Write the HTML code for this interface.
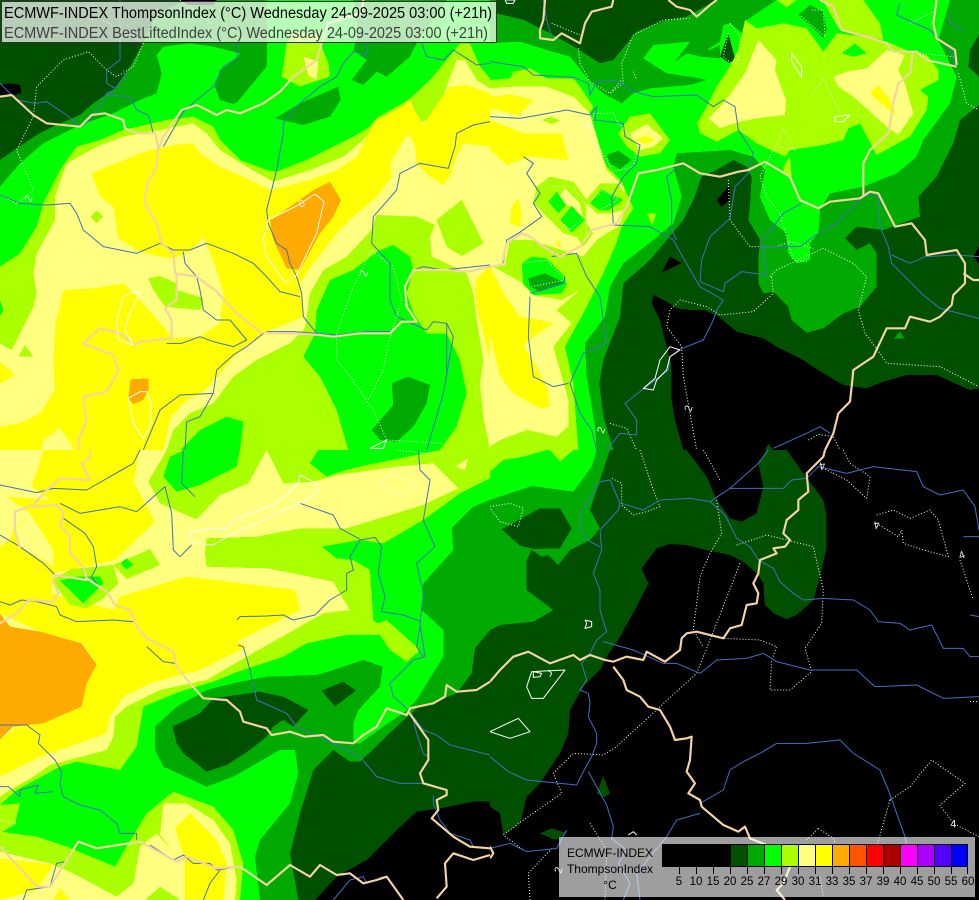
<!DOCTYPE html>
<html><head><meta charset="utf-8"><title>ECMWF-INDEX ThompsonIndex</title>
<style>
html,body{margin:0;padding:0;background:#000;width:979px;height:900px;overflow:hidden}
svg{display:block}
.a{fill:#005000}.b{fill:#00aa00}.c{fill:#00ff00}.d{fill:#aaff00}.e{fill:#ffff80}.f{fill:#ffff00}.g{fill:#ffaa00}.k{fill:#000}
polygon{shape-rendering:crispEdges}
polyline{fill:none;stroke-linejoin:round}
.B polyline{stroke:#3f70c4;stroke-width:3}
.T polyline{stroke:#f5d3a2;stroke-width:6.5}
.W polyline{stroke:#fff;stroke-width:3}
.D polyline{stroke:#fff;stroke-width:3;stroke-dasharray:3 6}
.L text{fill:#f0f0f0;font:32px "Liberation Sans",sans-serif;text-anchor:middle}
text{font-family:"Liberation Sans",sans-serif}
</style></head><body>
<svg width="979" height="900" viewBox="0 0 979 900" xmlns="http://www.w3.org/2000/svg">
<!-- Q1 -->
<svg x="0" y="0" width="490" height="450" viewBox="0 0 1470 1350">
<rect width="1470" height="1350" class="c"/>
<polygon class="b" points="0,0 1340,0 1250,130 1230,170 1160,230 1130,215 1090,255 1055,240 1100,180 1060,150 1075,100 1060,0 800,0 805,130 800,200 760,280 700,312 660,300 645,260 660,210 705,180 720,160 640,140 570,130 490,140 470,165 485,220 470,280 420,300 340,340 240,375 130,430 60,490 0,560"/>
<polygon class="c" points="805,0 1060,0 1075,100 1060,150 1100,180 1055,240 900,300 825,355 700,320 800,200"/>
<polygon class="a" points="0,0 640,0 560,0 470,40 430,130 390,200 345,265 280,310 240,345 170,375 110,405 50,445 0,480"/>
<polygon class="k" points="0,255 30,250 60,255 65,280 40,285 0,285"/>
<polygon class="k" points="540,0 650,0 640,15 560,15"/>
<polygon class="b" points="825,355 900,310 1015,260 1022,300 990,350 910,375"/>
<polygon class="d" points="860,130 845,230 900,260 990,230 985,190 950,100 880,100"/>
<polygon class="e" points="910,170 955,185 950,240 925,225"/>
<polygon class="d" points="0,800 60,760 110,680 130,610 180,510 230,440 300,420 370,390 500,360 580,350 640,380 660,420 720,480 800,510 830,515 920,480 1000,440 1060,410 1110,380 1130,355 1190,320 1225,300 1290,240 1340,180 1380,130 1410,130 1440,200 1470,235 1470,1350 0,1350"/>
<polygon class="e" points="35,1050 60,1000 100,920 110,880 100,820 110,760 165,660 165,590 200,490 290,440 370,410 480,390 580,370 620,400 660,450 740,500 820,545 930,510 1030,470 1090,420 1130,370 1200,340 1230,300 1260,370 1310,340 1340,260 1370,180 1395,180 1430,240 1470,265 1470,1350 0,1350 0,1030"/>
<polygon class="f" points="275,520 420,460 520,435 580,430 600,460 660,500 740,535 810,570 930,540 1010,510 1070,470 1125,360 1205,320 1225,300 1270,375 1320,300 1350,260 1400,255 1470,280 1470,440 1390,430 1365,480 1350,530 1330,555 1290,530 1250,490 1245,440 1225,400 1170,490 1175,530 1130,590 1060,650 1010,700 940,790 900,850 910,950 790,1000 720,1050 660,1120 605,1180 560,1200 510,1255 490,1350 225,1350 180,1285 130,1320 125,1350 0,1350 0,1280 60,1270 120,1240 165,1170 160,1100 165,980 190,870 280,865 370,850 355,715 340,620 300,590"/>
<polygon class="e" points="355,715 420,755 480,770 520,775 575,750 610,710 640,780 670,880 660,970 600,1010 520,1015 420,900 370,850"/>
<polygon class="f" points="0,1085 45,1125 0,1150"/>
<polygon class="d" points="272,650 290,632 310,650 290,670"/>
<polygon class="d" points="445,835 480,828 530,850 530,870 610,895 600,930 495,920 460,870"/>
<polygon class="d" points="55,1070 75,1035 100,1070"/>
<polygon class="g" points="810,660 870,620 940,570 990,545 1023,600 1000,650 960,700 900,810 860,805 820,720"/>
<polygon class="g" points="385,1195 392,1138 445,1135 445,1170 430,1200 400,1212"/>
<polygon class="d" points="500,1350 520,1290 570,1240 640,1210 700,1130 770,1080 870,1030 915,985 930,880 970,810 1040,770 1115,690 1130,645 1250,650 1305,675 1290,710 1295,770 1360,800 1400,820 1420,880 1430,960 1450,1080 1440,1150 1450,1250 1470,1350"/>
<polygon class="f" points="1470,795 1425,840 1430,920 1450,1000 1470,1080"/>
<polygon class="d" points="1310,660 1385,600 1450,730 1385,768 1340,740"/>
<polygon class="c" points="910,1070 945,1000 950,930 990,840 1060,810 1130,755 1180,735 1230,770 1240,810 1220,880 1240,940 1280,1000 1340,1000 1380,1080 1400,1180 1370,1280 1320,1350 1045,1350 1010,1230 960,1130"/>
<polygon class="c" points="540,1350 600,1290 680,1250 730,1265 720,1350"/>
<polygon class="c" points="0,900 10,930 0,950"/>
<polygon class="b" points="1115,1290 1180,1215 1175,1150 1225,1130 1290,1155 1280,1210 1240,1280 1190,1325 1140,1320"/>
<g class="D">
<polyline points="430,130 400,200 350,230 320,210 265,155 190,180 110,260 100,350 50,450 100,570 50,610 0,585"/>
<polyline points="1110,760 1060,860 1010,1000 1010,1080 1050,1130 1120,1230 1160,1320"/>
<polyline points="1110,750 1180,800 1205,900 1165,1030 1150,1110 1100,1210"/>
<polyline points="1160,1320 1330,1330"/>
<polyline points="310,60 430,130"/>
<polyline points="540,0 640,75"/>
</g>
<g class="B">
<polyline points="360,0 360,180 320,210 320,250 345,265 375,230 370,210"/>
<polyline points="345,270 320,280 270,360 240,380"/>
<polyline points="0,250 50,300 105,310 140,305 200,345 240,380"/>
<polyline points="320,285 390,290 410,330 445,345 460,400"/>
<polyline points="715,130 710,175 670,200 640,260 590,300 550,335 490,440"/>
<polyline points="1100,130 1100,165 1060,155 1030,190 1010,230 960,260 900,310 850,370 850,400 830,510 800,630 805,670 830,730 860,750 870,790 890,830 905,880 910,950 950,1000"/>
<polyline points="0,585 60,610 140,615 210,610 230,640 250,690 310,740 410,760 480,730 520,750 570,750 620,730 700,760 760,790 800,830 840,875 900,890"/>
<polyline points="550,755 555,790 590,830 600,870 610,930 650,960 690,960 740,1020 700,1040 640,1025 600,1010 545,1030 500,1030"/>
<polyline points="790,1000 740,1040 700,1065 650,1110 640,1180 540,1185 480,1230 430,1350"/>
<polyline points="640,1180 600,1250 560,1265 555,1350"/>
<polyline points="1470,365 1420,375 1370,400 1365,440 1345,505 1260,490 1200,520 1190,570 1120,650 1115,730 1170,790 1170,900 1190,950 1280,990 1300,965 1340,970 1360,1010 1330,1180 1280,1350"/>
<polyline points="1240,810 1270,800 1330,810 1470,795"/>
<polyline points="1265,130 1280,170 1330,180 1360,150 1400,175 1430,195 1470,190"/>
<polyline points="800,995 880,995 950,1000 1010,1005 1100,995 1180,995"/>
<polyline points="1340,970 1340,1130"/>
</g>
<g class="T">
<polyline points="0,290 35,285 100,345 140,370 240,380 275,345 315,340 370,360 375,385 410,400 465,400 475,440 470,500 440,555 435,610 470,670 485,730 520,760 525,820 590,830 650,875 710,940 780,995 800,1000 880,1000 960,1005 1000,1010 1080,1000 1170,1000 1205,965 1250,965 1220,920 1215,860 1240,810 1300,810 1340,810 1405,815 1470,800"/>
<polyline points="1090,0 1085,40 1030,55 985,70 965,130 950,180 880,230 840,275 790,310 720,340 680,330 650,345 590,315 545,330 490,410 475,450"/>
<polyline points="530,820 530,900 495,925 515,960 515,1015 420,1025 405,1035 360,1000 300,985 250,1030 340,1065 355,1110 340,1140 320,1175 250,1190 260,1260 235,1320 240,1350"/>
</g>
<g class="W">
<polyline points="805,660 895,615 945,582 972,605 950,700 890,825 855,848 800,770 790,720 805,660"/>
<polyline points="420,880 400,875 370,890 350,960 355,1020 400,1035 375,990 385,950 420,880"/>
<polyline points="385,1195 420,1175 440,1175 452,1210 452,1270 430,1315 400,1270 385,1195"/>
<polyline points="1110,1345 1160,1320 1150,1345 1110,1345"/>
</g>
<g class="L">
<text x="85" y="606" transform="rotate(-70 85 595)">2</text>
<text x="1090" y="832" transform="rotate(-70 1090 820)">2</text>
<text x="905" y="621" transform="rotate(-30 905 610)">0</text>
</g>
</svg>
<!-- Q2 -->
<svg x="490" y="0" width="489" height="450" viewBox="0 0 1467 1350">
<rect width="1467" height="1350" class="a"/>
<polygon class="b" points="0,0 1467,0 1467,315 1410,360 1390,430 1340,530 1285,590 1290,650 1180,690 1100,680 1065,715 1100,750 1140,730 1160,760 1160,860 1110,920 1060,940 1000,985 950,998 905,960 895,920 850,875 820,880 805,850 805,780 810,720 775,660 780,620 785,530 770,500 730,480 680,510 635,530 610,600 580,660 480,780 400,850 390,950 340,1080 328,1150 340,1250 370,1350 0,1350"/>
<polygon class="a" points="20,0 680,0 590,50 530,60 440,95 370,180 330,190 260,145 180,100 100,60 20,40"/>
<polygon class="a" points="1467,105 1440,150 1435,200 1467,230"/>
<polygon class="c" points="0,130 90,125 170,150 240,170 300,245 340,280 395,310 430,280 480,265 600,255 650,240 720,210 770,190 770,60 860,0 1380,0 1345,120 1400,230 1380,310 1300,420 1280,470 1220,520 1120,560 1020,580 990,630 985,700 960,730 960,780 920,790 895,760 890,700 840,660 810,590 825,510 790,470 720,450 560,460 550,500 575,590 550,670 490,720 400,790 360,860 345,950 285,1030 290,1130 315,1280 320,1350 0,1350"/>
<polygon class="c" points="460,175 490,135 600,125 650,150 690,125 700,75 720,70 770,110 780,150 770,190 720,210 650,240 600,230 530,220"/>
<polygon class="b" points="555,185 600,125 660,150 690,135 690,175 630,170 590,160"/>
<polygon class="a" points="715,100 735,175 720,190 690,170"/>
<polygon class="b" points="925,45 960,15 1000,35 1010,90 1000,115 965,80"/>
<polygon class="d" points="1000,0 1120,0 1170,70 1180,120 1130,110 1050,90 1020,40"/>
<polygon class="d" points="860,0 890,22 920,0"/>
<polygon class="d" points="765,60 800,85 880,70 950,85 1000,155 1040,100 1130,110 1190,125 1260,155 1310,165 1345,210 1345,240 1290,270 1315,290 1310,330 1260,410 1160,465 1110,370 1075,385 1060,420 1000,435 900,450 885,470 800,430 745,390 680,425 630,400 622,370 650,320 680,260 720,200 745,150"/>
<polygon class="c" points="1055,160 1095,130 1130,160 1090,170"/>
<polygon class="e" points="805,120 860,180 855,210 888,300 885,345 800,355 750,365 690,385 655,355 700,310 765,220"/>
<polygon class="e" points="1030,230 1070,215 1130,205 1190,150 1245,165 1225,210 1245,250 1270,340 1225,405 1190,380 1090,290 1045,260"/>
<polygon class="f" points="1140,280 1165,255 1200,300 1218,345 1195,330"/>
<polygon class="d" points="880,500 900,470 905,530 880,515"/>
<polygon class="d" points="0,240 60,235 70,215 120,205 170,235 250,235 270,260 310,320 295,345 270,420 300,445 320,430 350,500 395,545 430,625 395,680 375,740 340,820 300,900 285,930 225,1040 250,1150 265,1350 0,1350"/>
<polygon class="e" points="0,265 70,260 170,260 250,290 300,340 350,510 400,560 410,620 385,680 350,700 320,720 280,770 120,720 60,720 45,795 0,800"/>
<polygon class="e" points="0,795 100,850 130,885 215,900 270,870 200,930 245,970 190,1040 235,1200 235,1280 200,1310 110,1290 30,1320 0,1340"/>
<polygon class="d" points="65,790 100,725 130,720 170,760 290,770 310,800 340,820 300,880 270,870 215,900 130,885 95,850 90,820"/>
<polygon class="c" points="95,790 125,770 170,775 225,830 230,855 215,880 130,885 100,850"/>
<polygon class="b" points="115,835 165,820 225,850 150,875 120,860"/>
<polygon class="f" points="0,290 60,283 130,300 85,345 0,325"/>
<polygon class="f" points="0,360 100,400 215,400 235,480 120,470 50,495 0,450"/>
<polygon class="f" points="60,670 65,620 85,595 95,640 90,680"/>
<polygon class="f" points="0,800 40,880 90,950 150,960 190,970 130,1010 100,1035 140,1100 175,1170 178,1220 150,1225 70,1180 30,1130 0,1000"/>
<polygon class="f" points="197,730 207,722 213,735 205,740"/>
<polygon class="d" points="155,360 185,350 210,362 185,372"/>
<polygon class="d" points="140,560 180,530 250,545 290,600 290,670 310,700 280,740 260,710 220,700 160,640 130,610"/>
<polygon class="d" points="285,605 330,550 385,550 430,625 360,640 320,640"/>
<polygon class="e" points="200,600 225,565 270,610 280,660 245,620 225,615"/>
<polygon class="c" points="175,605 200,575 228,615 205,640"/>
<polygon class="c" points="210,660 245,618 285,660 245,697"/>
<polygon class="c" points="300,610 335,568 400,600 355,632 330,632"/>
<polygon class="d" points="385,400 420,350 480,340 540,420 510,460 450,470 410,440"/>
<polygon class="e" points="420,400 470,372 520,415 490,440 450,450"/>
<polygon class="f" points="435,420 465,407 495,420 465,432"/>
<polygon class="b" points="350,465 385,452 425,480 390,508 360,490"/>
<polygon class="d" points="470,640 500,640 487,675"/>
<polygon class="k" points="720,555 680,600 695,620 720,600"/>
<polygon class="k" points="515,818 540,770 575,790"/>
<polygon class="k" points="1467,740 1450,770 1467,790"/>
<polygon class="k" points="485,910 490,885 530,905 560,925 600,930 640,930 680,945 740,995 820,1015 860,1040 930,1075 1000,1120 1060,1155 1130,1165 1180,1145 1250,1125 1340,1125 1440,1170 1467,1165 1467,1350 590,1350 580,1350 555,1260 545,1200 545,1100 525,1020 510,960"/>
<polygon class="a" points="825,1350 835,1332 850,1350"/>
<polygon class="b" points="1212,1015 1230,995 1243,1015"/>
<g class="D">
<polyline points="265,145 270,190 300,245 360,280 395,240"/>
<polyline points="600,55 520,60 430,105 395,190 400,250 360,280"/>
<polyline points="430,215 440,240"/>
<polyline points="720,70 750,110 745,180 725,190 700,170 715,100"/>
<polyline points="185,70 270,105"/>
<polyline points="270,430 315,340 370,340 385,370 445,435 430,500 370,515 350,480 320,430"/>
<polyline points="190,560 250,560 290,620 290,700"/>
<polyline points="210,660 240,690 285,650"/>
<polyline points="300,605 340,570 385,600 330,630"/>
<polyline points="100,790 170,780 225,840 125,860"/>
<polyline points="965,285 1000,235 1050,340"/>
<polyline points="965,30 1000,30 1005,110 930,45"/>
<polyline points="880,385 915,450 860,440 880,385"/>
<polyline points="860,430 810,530 830,590 870,640 910,780 950,785"/>
<polyline points="715,540 720,660 780,740 860,740 900,725 970,745"/>
<polyline points="840,830 860,810 1000,745 1090,790 1130,830 1105,930 1125,1000 1170,1060 1190,1090 1350,1100 1467,1160"/>
<polyline points="845,830 850,880 790,935 690,945 650,920 570,900 540,930 530,980 575,1040 580,1130 620,1350"/>
<polyline points="360,1270 410,1285 440,1350"/>
<polyline points="1260,70 1340,30"/>
<polyline points="1290,160 1390,170"/>
<polyline points="1405,220 1430,310 1467,330"/>
<polyline points="955,1320 985,1303 1030,1310 1050,1350"/>
</g>
<g class="B">
<polyline points="160,0 170,60 185,110"/>
<polyline points="0,185 100,200 130,225 250,232 295,250 300,285 320,245 380,240 430,275 490,290 620,285 670,320 700,300 735,320 745,390 790,460 775,520 735,560 720,655 660,710 635,780 630,845 700,875 705,850 755,815 830,825 815,720 850,680 880,640 935,610"/>
<polyline points="0,350 90,355 230,330 300,345 320,320 315,360 400,370 405,410 450,435 440,490 400,530 365,590 370,675 480,680 550,720 595,800 630,860 700,900 680,930 670,960 640,1020 570,1048 540,1070 535,1110 430,1190 405,1210 440,1260 440,1305 390,1300 350,1350"/>
<polyline points="100,470 130,490 110,520 150,580 130,610 155,650 85,700 50,720 40,790"/>
<polyline points="185,770 260,760 290,830 330,890 340,960 350,1030 280,1060 240,1150 270,1240 305,1290 320,1350"/>
<polyline points="120,890 115,1010 130,1130 190,1160 235,1150"/>
<polyline points="120,880 220,850 225,830"/>
<polyline points="565,500 530,530 545,600 545,690 560,720"/>
<polyline points="805,740 930,740 985,700 1040,670 1100,610 1115,590 1165,580 1170,680 1195,740 1205,790 1300,885 1350,925 1467,955"/>
<polyline points="1205,765 1260,790 1305,770 1400,765 1467,770"/>
<polyline points="1380,40 1380,70 1420,90"/>
<polyline points="1230,10 1220,45 1320,90 1380,150 1395,195"/>
<polyline points="850,1345 950,1300 990,1280 1020,1300"/>
</g>
<g class="T">
<polyline points="370,0 365,20 305,35 285,70 270,130 215,100 190,120 150,115 150,90 160,60 165,0"/>
<polyline points="535,0 560,20 600,30 620,50 660,15 680,0"/>
<polyline points="990,0 1030,20 1055,90 1130,110 1190,130 1210,155 1280,155 1310,180 1400,200"/>
<polyline points="1268,160 1260,220 1225,250 1210,310 1195,400 1140,450 1120,490 1120,590"/>
<polyline points="1340,0 1330,70 1340,115 1395,150 1400,195"/>
<polyline points="0,800 35,795 50,730 95,700 120,710 175,750 210,770 270,740 305,690 360,675 380,670 410,620 445,520 500,510 580,490 630,520 690,530 745,515 775,510 825,485 900,530 930,600 985,625 1020,605 1110,595 1140,575 1165,580 1195,640 1215,680 1265,670 1305,720 1310,765 1400,750 1425,790 1425,850 1390,885 1385,915 1350,950 1320,965 1260,950 1245,985 1190,985 1150,1070 1090,1110 1085,1160 1080,1205 1045,1240 1030,1300 1005,1350"/>
<polyline points="1420,820 1450,840 1467,840"/>
</g>
<g class="W">
<polyline points="905,160 935,200 935,232 905,185 905,160"/>
<polyline points="1035,350 1080,345 1060,365 1035,365 1035,350"/>
<polyline points="540,1040 570,1050 540,1070 530,1110 500,1140 490,1170 460,1165 495,1135 510,1080 540,1040"/>
<polyline points="45,0 75,0 70,10 50,10 45,0"/>
</g>
<g class="L">
<text x="293" y="386" transform="rotate(-70 293 375)">2</text>
<text x="595" y="1236" transform="rotate(-70 595 1225)">2</text>
<text x="333" y="1301" transform="rotate(-70 333 1290)">2</text>
</g>
</svg>
<!-- Q3 -->
<svg x="0" y="450" width="490" height="450" viewBox="0 0 1470 1350">
<rect width="1470" height="1350" class="c"/>
<polygon class="b" points="1470,150 1420,170 1355,235 1360,300 1270,400 1265,480 1330,540 1330,620 1250,750 1215,785 1150,830 1080,880 1060,880 1060,820 1075,780 1140,710 1148,650 1090,630 1000,660 950,675 800,680 700,700 620,720 530,770 465,830 465,900 490,950 620,1010 700,980 840,900 885,900 895,970 870,1060 780,1170 765,1220 780,1350 1470,1350"/>
<polygon class="a" points="1470,540 1425,595 1415,670 1370,730 1250,775 1200,820 1080,935 1050,935 1000,900 940,960 900,1090 870,1210 895,1350 1470,1350"/>
<polygon class="a" points="518,830 600,790 640,745 780,725 850,740 925,780 880,830 850,810 820,830 800,860 750,900 680,945 620,965 550,910 530,880"/>
<polygon class="a" points="965,722 1030,695 1068,722 1005,770"/>
<polygon class="k" points="1470,1055 1420,1055 1320,1075 1250,1085 1190,1140 1100,1230 1010,1280 950,1345 950,1350 1470,1350"/>
<polygon class="d" points="0,0 1470,0 1470,85 1380,130 1270,210 1150,280 1080,270 965,290 1010,325 1060,330 1110,360 1120,510 1135,520 1160,510 1260,600 1220,635 1170,600 1140,555 1040,555 920,580 850,620 700,670 640,695 540,725 430,770 410,890 360,960 230,935 180,950 50,1020 0,1065"/>
<polygon class="c" points="490,80 510,20 555,0 720,0 710,50 600,105 530,125"/>
<polygon class="c" points="930,40 955,0 1320,0 1200,25 1100,45 1020,65 980,80"/>
<polygon class="e" points="0,0 500,0 445,95 480,160 590,208 660,135 745,100 800,0 850,100 940,95 1010,75 1190,50 1300,40 1375,115 1270,165 1040,235 900,235 770,260 620,265 615,310 620,350 800,355 880,370 1000,395 1020,430 1050,480 970,490 900,530 740,620 620,690 480,720 380,770 345,800 340,860 320,900 150,945 100,980 30,1020 0,1040"/>
<polygon class="e" points="1365,50 1405,25 1395,60"/>
<polygon class="f" points="130,0 420,0 400,95 465,215 345,330 160,370 155,430 340,480 360,440 560,380 885,420 900,480 710,575 740,590 600,660 520,680 450,700 370,740 330,800 320,850 120,920 0,980 0,870 50,830 130,820 230,770 260,680 290,645 250,580 120,545 0,490 0,290 30,270 40,240 90,190 20,140 150,150 95,110"/>
<polygon class="e" points="90,190 160,300 160,350 60,290 45,240"/>
<polygon class="g" points="0,490 30,530 120,545 245,580 290,645 260,700 245,770 130,820 40,830 0,870"/>
<polygon class="d" points="155,390 215,357 340,345 355,400 310,445 260,475 210,465"/>
<polygon class="d" points="340,345 450,297 480,345 380,387"/>
<polygon class="c" points="180,392 230,380 300,380 310,400 250,460"/>
<polygon class="c" points="362,340 380,325 400,345 378,358"/>
<polygon class="d" points="0,1145 110,1160 200,1190 345,1250 380,1190 440,1090 520,1025 640,1070 700,1140 730,1240 720,1350 0,1350"/>
<polygon class="d" points="0,1065 60,1060 45,1120 0,1150"/>
<polygon class="e" points="0,1205 150,1240 220,1270 350,1340 400,1300 420,1190 470,1150 520,1205 480,1155 490,1060 560,1060 640,1110 690,1180 710,1290 705,1350 0,1350"/>
<polygon class="f" points="525,1135 570,1090 650,1170 680,1240 670,1350 555,1350 555,1230"/>
<polygon class="f" points="0,1225 160,1245 110,1320 0,1350"/>
<polygon class="f" points="160,1350 180,1315 210,1350"/>
<polygon class="d" points="435,1350 480,1310 540,1350"/>
<g class="D">
<polyline points="1190,0 1280,10 1320,10"/>
<polyline points="1140,100 1170,70 1250,100 1240,125 1180,135 1140,100"/>
<polyline points="0,1110 50,1120 10,1145"/>
</g>
<g class="B">
<polyline points="0,105 110,128 160,115 260,120 330,80 400,40 420,0"/>
<polyline points="180,160 240,190 360,170 410,185 495,110 515,190 520,300 540,320 575,285"/>
<polyline points="550,0 545,100 585,140"/>
<polyline points="190,205 255,250 280,290 290,350 275,380 300,415"/>
<polyline points="0,255 60,290 130,340 165,375"/>
<polyline points="0,455 30,465 65,450 110,455 170,470 180,495 230,515 340,510 400,515"/>
<polyline points="0,825 80,825 120,855 115,880 165,930 185,965 180,1000 190,1040 240,1065 300,1080 350,1120 360,1150 410,1150 410,1170"/>
<polyline points="0,1010 25,1010 60,1040 60,1020 115,1005 105,1030 160,1025"/>
<polyline points="440,590 490,635 525,640"/>
<polyline points="710,510 720,500 800,498 850,495 880,510 945,495 990,450 1040,420 1040,370 1060,360 1050,320 1080,270 1125,262 1145,290 1135,370 1155,440 1145,485 1210,495 1265,515"/>
<polyline points="900,160 1000,195 1020,235 1080,268"/>
<polyline points="1255,0 1260,60 1290,90 1270,210 1305,290 1250,340 1270,430 1260,520 1275,620 1240,630 1170,700 1180,740 1220,775"/>
<polyline points="1260,530 1250,590 1270,620"/>
<polyline points="715,585 730,590 750,660 770,750 860,790 890,830 1000,880 1080,920 1130,980 1200,1000 1280,1000"/>
<polyline points="1240,800 1270,840 1310,855 1350,885 1470,915"/>
<polyline points="1235,790 1250,850 1270,910 1285,920"/>
<polyline points="1300,1035 1300,1060 1320,1110 1350,1150 1410,1170 1420,1190"/>
<polyline points="450,1185 520,1230 550,1215 580,1240 630,1240 650,1260 720,1250"/>
<polyline points="195,1235 170,1240 150,1310 80,1320 70,1350"/>
<polyline points="660,1260 630,1300 610,1350"/>
<polyline points="1000,1350 1050,1290 1090,1280 1100,1300 1150,1280"/>
</g>
<g class="T">
<polyline points="270,0 270,20 245,40 270,90 180,85 135,125 100,165 45,185 45,240 60,295"/>
<polyline points="100,170 170,165 190,190 180,225 210,260 210,305 255,360 260,390 165,375 160,395 175,430 160,455 85,450 50,490 0,520"/>
<polyline points="260,385 320,425 345,465 390,480 410,530 440,565 520,605 530,650 570,700 610,745 680,750 720,785 730,815 800,835 815,855 870,845 915,860 970,855 1000,875 1060,880 1090,855 1130,830 1160,775 1220,795 1230,775 1300,760 1335,740 1340,705 1370,725 1430,720 1470,695"/>
<polyline points="1225,785 1285,870 1285,930 1260,970 1270,1000 1340,1020 1340,1035 1310,1050 1315,1080 1295,1105 1360,1160 1410,1190 1470,1195"/>
<polyline points="0,1190 110,1310 150,1310 210,1215 235,1175 290,1195 420,1175 530,1235 560,1220 650,1255 720,1250 800,1305 870,1245 930,1280 960,1245 1010,1275 1050,1270 1090,1300 1130,1290 1160,1280 1210,1350"/>
<polyline points="1470,1215 1420,1230 1360,1210 1335,1240 1340,1310 1310,1345"/>
</g>
<g class="W">
<polyline points="565,270 570,245 630,235 680,235 700,210 830,160 895,100 900,75 950,100 955,125 920,150 830,190 770,220 690,255 640,285 590,280 565,270"/>
</g>
</svg>
<!-- Q4 -->
<svg x="490" y="450" width="489" height="450" viewBox="0 0 1467 1350">
<rect width="1467" height="1350" class="k"/>
<polygon class="a" points="590,0 650,80 680,150 720,205 755,215 800,190 820,110 805,40 830,0 890,0 940,70 1000,150 1010,200 1010,290 990,380 970,450 920,495 890,507 850,490 825,465 820,400 800,370 760,335 720,315 650,300 590,285 540,282 500,295 455,355 475,400 440,470 390,560 350,620 330,660 280,710 240,780 235,850 210,910 150,1000 110,1040 90,1120 40,1155 30,1090 0,1070 0,0"/>
<polygon class="a" points="340,978 360,1030 345,1042 320,1030"/>
<polygon class="a" points="150,1150 185,1135 230,1150 195,1170"/>
<polygon class="b" points="0,540 30,525 130,515 190,480 110,420 110,330 125,300 155,320 175,315 205,345 240,300 300,270 330,235 300,180 360,0 0,0"/>
<polygon class="a" points="35,238 150,175 210,175 245,235 210,295 130,297 90,287"/>
<polygon class="c" points="0,150 125,108 250,125 305,50 320,0 0,0"/>
<polygon class="d" points="0,65 40,30 100,20 170,0 0,0"/>
<polygon class="d" points="180,0 210,35 250,0"/>
<g class="D">
<polyline points="450,0 490,120 510,170 470,185 430,195 395,165 395,100 365,85"/>
<polyline points="640,0 690,90"/>
<polyline points="680,150 695,250 660,310 630,380 610,540 640,590"/>
<polyline points="750,340 680,520 620,670 510,770 380,890 340,915 250,910 190,970 215,1030 100,1110 40,1155 100,1200"/>
<polyline points="740,285 830,255 970,290 1000,420 995,520 945,595 965,665 900,720 840,720 845,630 860,590 810,570 700,565"/>
<polyline points="1060,0 1080,40 1140,80 1130,145 1070,90 990,50"/>
<polyline points="1160,195 1210,180 1260,205 1320,180 1345,210 1375,320 1300,300 1240,280 1235,240 1225,260 1160,220"/>
<polyline points="1410,330 1450,450"/>
<polyline points="1440,755 1467,755"/>
<polyline points="1200,1050 1260,1010 1325,930 1425,1000 1350,1065 1390,1120 1467,1160"/>
<polyline points="1200,1050 1160,1190"/>
<polyline points="0,170 60,160 100,175 85,230 30,215 0,175"/>
<polyline points="300,1120 350,1200 345,1350"/>
<polyline points="120,1350 115,1270 190,1190"/>
<polyline points="985,1135 1030,1165 1040,1190"/>
<polyline points="950,1170 985,1135"/>
<polyline points="990,1280 1000,1340"/>
</g>
<g class="B">
<polyline points="0,920 55,965 110,990 260,1005 280,965 305,920 320,880 320,850 295,800 300,760 295,730 270,720 290,690 275,640 300,610 320,570 350,545 330,480 330,420 310,370 335,300 330,240 385,180 390,160 360,90 330,95 295,150 270,190 270,230 290,270 330,290"/>
<polyline points="395,160 460,180 510,150 600,145 660,155 720,115 880,115 905,90 950,85 985,50 1070,70 1150,50 1280,65 1300,110 1350,135 1420,120 1455,170 1467,240"/>
<polyline points="1420,260 1467,260"/>
<polyline points="660,155 705,195 740,265 780,290 805,330 850,355 870,395 910,430 940,450 1000,445 1090,450 1140,480 1165,515 1230,520 1260,540 1325,525 1360,595 1420,595 1440,620 1467,620"/>
<polyline points="720,115 805,40 835,0"/>
<polyline points="340,575 430,600 520,640 560,640 630,670 680,630 770,625 820,610 860,635 960,660 1100,660 1155,710 1280,705 1360,745 1467,740"/>
<polyline points="630,1060 700,1020 720,960 760,935 810,910 860,880 950,880 1050,870 1090,910 1170,960 1195,1020 1245,1160 1250,1190"/>
<polyline points="630,1090 560,1110 530,1160 440,1270 450,1350"/>
<polyline points="295,965 350,1065 370,1130 365,1165 410,1200 385,1240 420,1300 400,1350"/>
<polyline points="0,1195 60,1180 110,1205 200,1195 230,1140"/>
<polyline points="1440,495 1467,500"/>
</g>
<g class="T">
<polyline points="1005,0 1000,20 950,70 955,125 925,150 925,180 890,210 880,250 900,270 885,290 850,295 860,310 810,330 805,370 790,400 805,430 800,460 770,465 755,525 720,535 700,565 620,545 590,550 575,565 570,600 525,635 470,605 460,630 410,620 370,635 345,630 300,615 270,630 250,615 180,640 115,605 70,620 30,660 0,695"/>
<polyline points="370,650 400,690 410,720 450,740 475,770 510,780 540,830 555,870 590,865 605,860 600,930 590,965 615,1000 595,1030 630,1050 635,1070 700,1125 745,1145 765,1130 780,1165 830,1185 900,1250 880,1300 860,1320 885,1350"/>
<polyline points="0,1190 10,1210 0,1225"/>
</g>
<g class="W">
<polyline points="125,665 225,660 160,745 125,745 110,710 125,665"/>
<polyline points="0,845 85,805 120,845 60,865 0,845"/>
<polyline points="285,510 305,515 305,530 285,535 290,520 285,510"/>
<polyline points="130,665 155,670 150,680 130,682 130,665"/>
<polyline points="175,660 185,670 180,680"/>
<polyline points="415,1155 430,1145 440,1155"/>
</g>
<g class="L">
<text x="1390" y="1132">4</text>
<text x="997" y="59" transform="rotate(170 997 48)">4</text>
<text x="1160" y="236" transform="rotate(170 1160 225)">4</text>
<text x="1415" y="326" transform="rotate(-20 1415 315)">4</text>
<text x="205" y="1271" transform="rotate(-70 205 1260)">2</text>
</g>
</svg>
<!-- header -->
<rect x="1.5" y="1.5" width="495" height="41" fill="#fff" fill-opacity=".72" stroke="#303030" stroke-width="1"/>
<text x="4" y="18" font-size="15.5" fill="#000" textLength="488" lengthAdjust="spacingAndGlyphs">ECMWF-INDEX ThompsonIndex (°C) Wednesday 24-09-2025 03:00 (+21h)</text>
<text x="4" y="38" font-size="15.5" fill="#404040" textLength="484" lengthAdjust="spacingAndGlyphs">ECMWF-INDEX BestLiftedIndex (°C) Wednesday 24-09-2025 03:00 (+21h)</text>
<!-- legend -->
<rect x="559" y="837" width="416" height="60" fill="#fff" fill-opacity=".62"/>
<g shape-rendering="crispEdges">
<rect x="662" y="844" width="306" height="23" fill="#000"/>
<rect x="731" y="845" width="16" height="21" fill="#005000"/><rect x="748" y="845" width="16" height="21" fill="#00aa00"/><rect x="765" y="845" width="16" height="21" fill="#00ff00"/><rect x="782" y="845" width="16" height="21" fill="#aaff00"/><rect x="799" y="845" width="16" height="21" fill="#ffff80"/><rect x="816" y="845" width="16" height="21" fill="#ffff00"/><rect x="833" y="845" width="16" height="21" fill="#ffaa00"/><rect x="850" y="845" width="16" height="21" fill="#ff5500"/><rect x="867" y="845" width="16" height="21" fill="#ff0000"/><rect x="884" y="845" width="16" height="21" fill="#aa0000"/><rect x="901" y="845" width="16" height="21" fill="#ff00ff"/><rect x="918" y="845" width="16" height="21" fill="#aa00ff"/><rect x="935" y="845" width="16" height="21" fill="#5500ff"/><rect x="952" y="845" width="15" height="21" fill="#0000ff"/>
<path stroke="#000" fill="none" d="M679.5 867V874M696.5 867V874M713.5 867V874M730.5 867V874M747.5 867V874M764.5 867V874M781.5 867V874M798.5 867V874M815.5 867V874M832.5 867V874M849.5 867V874M866.5 867V874M883.5 867V874M900.5 867V874M917.5 867V874M934.5 867V874M951.5 867V874M967.5 867V874"/>
</g>
<g font-size="12" fill="#000" text-anchor="middle">
<text x="610" y="857">ECMWF-INDEX</text>
<text x="610" y="873">ThompsonIndex</text>
<text x="610" y="889">°C</text>
<g font-size="11.5">
<text x="679" y="885">5</text><text x="696" y="885">10</text><text x="713" y="885">15</text><text x="730" y="885">20</text><text x="747" y="885">25</text><text x="764" y="885">27</text><text x="781" y="885">29</text><text x="798" y="885">30</text><text x="815" y="885">31</text><text x="832" y="885">33</text><text x="849" y="885">35</text><text x="866" y="885">37</text><text x="883" y="885">39</text><text x="900" y="885">40</text><text x="917" y="885">45</text><text x="934" y="885">50</text><text x="951" y="885">55</text><text x="968" y="885">60</text>
</g>
</g>
</svg>
</body></html>
